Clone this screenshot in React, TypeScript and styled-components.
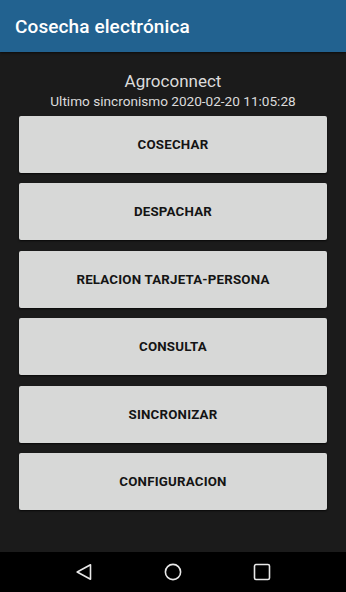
import { createGlobalStyle, styled } from "styled-components";

const GlobalStyle = createGlobalStyle`
  html, body {
    margin: 0;
    padding: 0;
    background: #1b1b1b;
  }
  * {
    box-sizing: border-box;
  }
`;

const actions = [
  "COSECHAR",
  "DESPACHAR",
  "RELACION TARJETA-PERSONA",
  "CONSULTA",
  "SINCRONIZAR",
  "CONFIGURACION",
];

const App = () => {
  return (
    <>
      <GlobalStyle />
      <Screen>
        <AppBar>
          <Title>Cosecha electrónica</Title>
        </AppBar>
        <Main>
          <AppName>Agroconnect</AppName>
          <SyncInfo>Ultimo sincronismo 2020-02-20 11:05:28</SyncInfo>
          <ButtonList>
            {actions.map((label) => (
              <ActionButton key={label}>{label}</ActionButton>
            ))}
          </ButtonList>
        </Main>
        <NavBar>
          <NavIcon viewBox="0 0 18 18">
            <path
              d="M15.5 1.8 L2.2 9 L15.5 16.2 Z"
              fill="none"
              stroke="#e8e8e8"
              strokeWidth="1.6"
              strokeLinejoin="round"
            />
          </NavIcon>
          <NavIcon viewBox="0 0 18 18">
            <circle cx="9" cy="9" r="7.6" fill="none" stroke="#e8e8e8" strokeWidth="1.6" />
          </NavIcon>
          <NavIcon viewBox="0 0 18 18">
            <rect
              x="1.5"
              y="1.5"
              width="15"
              height="15"
              rx="1.6"
              fill="none"
              stroke="#e8e8e8"
              strokeWidth="1.6"
            />
          </NavIcon>
        </NavBar>
      </Screen>
    </>
  );
};

const Screen = styled.div`
  display: flex;
  flex-direction: column;
  width: 100%;
  height: 100vh;
  font-family: Roboto, "Liberation Sans", sans-serif;
  background: #1b1b1b;
`;

const AppBar = styled.header`
  height: 52px;
  flex-shrink: 0;
  display: flex;
  align-items: center;
  padding: 0 15px;
  background: #226290;
  box-shadow: 0 1px 2px rgba(0, 0, 0, 0.6);
  position: relative;
  z-index: 1;
`;

const Title = styled.h1`
  margin: 0;
  color: #ffffff;
  font-size: 19px;
  font-weight: 500;
  letter-spacing: 0.1px;
`;

const Main = styled.main`
  flex: 1;
  display: flex;
  flex-direction: column;
  align-items: center;
  padding: 19px 19px 0;
`;

const AppName = styled.div`
  color: #dcdcdc;
  font-size: 17px;
  line-height: 20px;
`;

const SyncInfo = styled.div`
  color: #dcdcdc;
  font-size: 13.6px;
  line-height: 16px;
  margin-top: 2px;
`;

const ButtonList = styled.div`
  width: 100%;
  display: flex;
  flex-direction: column;
  gap: 10.4px;
  margin-top: 7px;
`;

const ActionButton = styled.button`
  height: 57px;
  width: 100%;
  border: none;
  border-radius: 2px;
  background: #d7d8d7;
  color: #141414;
  font-family: Roboto, "Liberation Sans", sans-serif;
  font-size: 13.3px;
  font-weight: 700;
  letter-spacing: 0.2px;
  box-shadow: 0 1px 2px rgba(0, 0, 0, 0.7);
  cursor: pointer;
`;

const NavBar = styled.nav`
  height: 40px;
  flex-shrink: 0;
  background: #000000;
  display: flex;
  align-items: center;
  justify-content: center;
  gap: 71px;
`;

const NavIcon = styled.svg`
  width: 18px;
  height: 18px;
`;

export default App;
